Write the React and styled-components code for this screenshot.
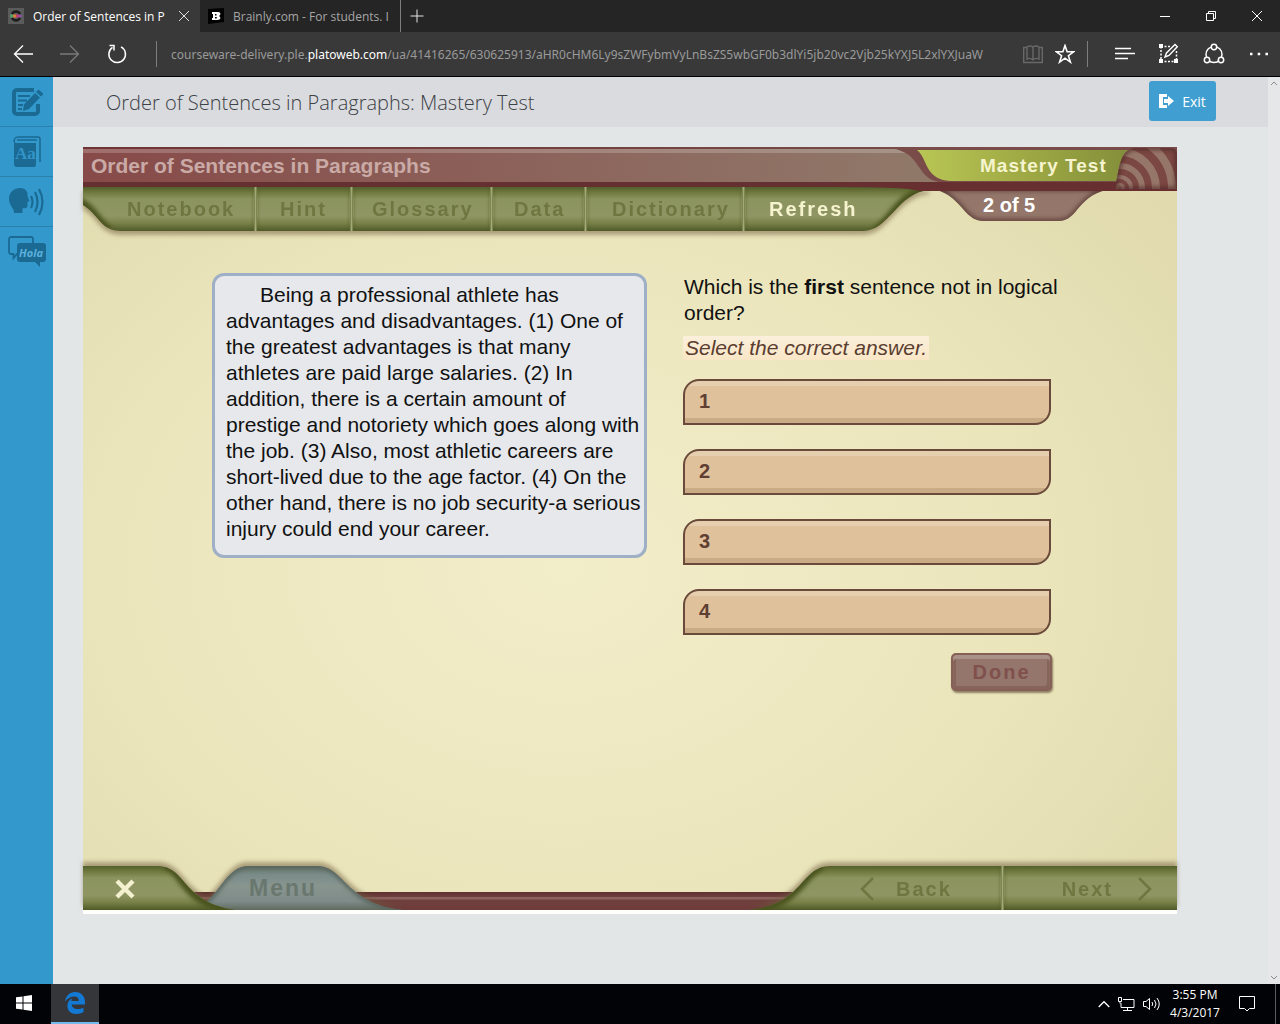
import React from "react";
import styled, { createGlobalStyle, css } from "styled-components";

const uiFont = `"Open Sans", "Noto Sans", sans-serif`;
const courseFont = `"Liberation Sans", Arial, sans-serif`;

const navItems = [
	{ label: "Notebook", width: 133, start: 6, disabled: true },
	{ label: "Hint", width: 93, start: 23, disabled: true },
	{ label: "Glossary", width: 137, start: 19, disabled: true },
	{ label: "Data", width: 91, start: 21, disabled: true },
	{ label: "Dictionary", width: 155, start: 25, disabled: true },
	{ label: "Refresh", width: 118, start: 24 }
];

const passage = [
	"Being a professional athlete has",
	"advantages and disadvantages. (1) One of",
	"the greatest advantages is that many",
	"athletes are paid large salaries. (2) In",
	"addition, there is a certain amount of",
	"prestige and notoriety which goes along with",
	"the job. (3) Also, most athletic careers are",
	"short-lived due to the age factor. (4) On the",
	"other hand, there is no job security-a serious",
	"injury could end your career."
];

const answers = ["1", "2", "3", "4"];

const OliveStops = () => (
	<>
		<stop offset="0" stopColor="#53602b" />
		<stop offset="0.12" stopColor="#6f783e" />
		<stop offset="0.27" stopColor="#8b935e" />
		<stop offset="0.66" stopColor="#8f9664" />
		<stop offset="0.82" stopColor="#7a8249" />
		<stop offset="1" stopColor="#4f5a28" />
	</>
);

const BrowserTabs = () => (
	<TabStrip>
		<Tab $active>
			<svg width="16" height="16" viewBox="0 0 16 16">
				<rect width="16" height="16" fill="#5b5b5b" />
				<path d="M4 6a4.5 4.5 0 0 1 8 0" fill="none" stroke="#1d1d1d" strokeWidth="2.4" />
				<path d="M4 10a4.5 4.5 0 0 0 8 0" fill="none" stroke="#1d1d1d" strokeWidth="2.4" />
				<path d="M2 8h3" stroke="#4fa06a" strokeWidth="3" />
				<path d="M5 8h3" stroke="#d9803a" strokeWidth="3" />
				<path d="M8 8h3" stroke="#c23a72" strokeWidth="3" />
				<path d="M11 8h3" stroke="#8a4fb0" strokeWidth="2" />
			</svg>
			<TabTitle>Order of Sentences in P</TabTitle>
			<ChromeButton aria-label="Close tab">
				<svg width="12" height="12" viewBox="0 0 12 12">
					<path d="M1 1l10 10M11 1L1 11" stroke="#e0e0e0" />
				</svg>
			</ChromeButton>
		</Tab>
		<Tab>
			<svg width="16" height="16" viewBox="0 0 16 16">
				<path d="M0 1l16-1v14L0 16z" fill="#000" />
				<path
					d="M4 4h6c3 0 3 3 1 4c2 1 2 4-1.500 4H4v-2h1V6H4zM7 6v1.500h1.500V6zM7 9v1.500h1.800V9z"
					fill="#fff"
					fillRule="evenodd"
				/>
			</svg>
			<TabTitle>Brainly.com - For students. I</TabTitle>
		</Tab>
		<NewTab aria-label="New tab">
			<svg width="14" height="14" viewBox="0 0 14 14">
				<path d="M7 .5v13M.5 7h13" stroke="#e6e6e6" />
			</svg>
		</NewTab>
		<WindowButtons>
			<WindowButton aria-label="Minimize">
				<svg width="12" height="12" viewBox="0 0 12 12">
					<path d="M1 6.500h10" stroke="#fff" />
				</svg>
			</WindowButton>
			<WindowButton aria-label="Restore">
				<svg width="12" height="12" viewBox="0 0 12 12">
					<path d="M1.500 3.500h7v7h-7zM3.500 3V1.500h7v7H9" fill="none" stroke="#fff" />
				</svg>
			</WindowButton>
			<WindowButton aria-label="Close">
				<svg width="12" height="12" viewBox="0 0 12 12">
					<path d="M1 1l10 10M11 1L1 11" stroke="#fff" />
				</svg>
			</WindowButton>
		</WindowButtons>
	</TabStrip>
);

const BrowserBar = () => (
	<Toolbar>
		<ToolGroup $width={46}>
			<ChromeButton aria-label="Back">
				<svg width="20" height="20" viewBox="0 0 20 20">
					<path d="M10 1.500L1.500 10l8.500 8.500M1.500 10H20" fill="none" stroke="#fff" strokeWidth="1.300" />
				</svg>
			</ChromeButton>
		</ToolGroup>
		<ToolGroup $width={48}>
			<ChromeButton aria-label="Forward" disabled>
				<svg width="20" height="20" viewBox="0 0 20 20">
					<path d="M10 1.500L18.500 10L10 18.500M18.500 10H0" fill="none" stroke="#7a7a7a" strokeWidth="1.300" />
				</svg>
			</ChromeButton>
		</ToolGroup>
		<ToolGroup $width={46}>
			<ChromeButton aria-label="Refresh">
				<svg width="20" height="20" viewBox="0 0 20 20">
					<path d="M5.500 3.400A8.300 8.300 0 1 0 14 2.900" fill="none" stroke="#fff" strokeWidth="1.500" />
					<path d="M2.500 1.500h4.500v5" fill="none" stroke="#fff" strokeWidth="1.500" />
				</svg>
			</ChromeButton>
		</ToolGroup>
		<Divider $left={16} />
		<Address role="textbox" aria-label="Address" tabIndex={0}>
			courseware-delivery.ple.<strong>platoweb.com</strong>
			/ua/41416265/630625913/aHR0cHM6Ly9sZWFybmVyLnBsZS5wbGF0b3dlYi5jb20vc2Vjb25kYXJ5L2xlYXJuaW
		</Address>
		<ToolGroup $width={32}>
			<ChromeButton aria-label="Reading view" disabled>
				<svg width="20" height="20" viewBox="0 0 20 20">
					<path
						d="M10 3v13.500M10 3c-2-1.300-4-1.300-6 0v12c2-1 4-1 6 1M10 3c2-1.300 4-1.300 6 0v12c-2-1-4-1-6 1M4 3.500H.7v15h18.600v-15H16"
						fill="none"
						stroke="#686868"
						strokeWidth="1.400"
					/>
				</svg>
			</ChromeButton>
		</ToolGroup>
		<ToolGroup $width={32}>
			<ChromeButton aria-label="Add to favorites">
				<svg width="20" height="20" viewBox="0 0 20 20">
					<path
						d="M10 1.500l2.100 6.300h6.500l-5.200 3.900 2 6.400L10 14.200l-5.400 3.900 2-6.400-5.200-3.900h6.500z"
						fill="none"
						stroke="#fff"
						strokeWidth="1.600"
					/>
				</svg>
			</ChromeButton>
		</ToolGroup>
		<Divider $left={6} />
		<ToolGroup $width={74}>
			<ChromeButton aria-label="Hub">
				<svg width="20" height="14" viewBox="0 0 20 14">
					<path d="M0 1.500h16M0 6.500h20M0 11.500h13" stroke="#fff" strokeWidth="1.400" />
				</svg>
			</ChromeButton>
		</ToolGroup>
		<ToolGroup $width={14}>
			<ChromeButton aria-label="Make a web note">
				<svg width="22" height="22" viewBox="0 0 22 22">
					<path d="M3 3.500h10M3 3.500v14M3 18.500h14M18.500 8v10" fill="none" stroke="#fff" strokeWidth="1.500" strokeDasharray="2 1.500" />
					<path d="M1 1h4v4H1zM1 16h4v4H1zM16 16h4v4h-4z" fill="#fff" />
					<path d="M7 14l1.500-4L17 1.500l2.300 2.300L11 12.500z" fill="#393939" stroke="#fff" strokeWidth="1.400" />
				</svg>
			</ChromeButton>
		</ToolGroup>
		<ToolGroup $width={76}>
			<ChromeButton aria-label="Share">
				<svg width="22" height="22" viewBox="0 0 22 22">
					<circle cx="11" cy="11.500" r="8" fill="none" stroke="#fff" strokeWidth="1.500" />
					<g fill="#393939" stroke="#fff" strokeWidth="1.500">
						<circle cx="11" cy="4" r="2.700" />
						<circle cx="4" cy="17" r="2.700" />
						<circle cx="18" cy="17" r="2.700" />
					</g>
				</svg>
			</ChromeButton>
		</ToolGroup>
		<ToolGroup $width={14}>
			<ChromeButton aria-label="More">
				<svg width="18" height="4" viewBox="0 0 18 4">
					<path d="M0 .7h2.500v2.500H0zM7.700.7h2.500v2.500H7.700zM15.400.7H18v2.500h-2.600z" fill="#fff" />
				</svg>
			</ChromeButton>
		</ToolGroup>
	</Toolbar>
);

const NotesIcon = () => (
	<svg width="32" height="30" viewBox="0 0 32 30">
		<path d="M23 3H6A3 3 0 0 0 3 6v18A3 3 0 0 0 6 27h18a3 3 0 0 0 3-3V17" fill="none" stroke="#1a6a94" strokeWidth="4" />
		<path d="M7 9h12M7 13.500h9M7 18h5M7 22h4" stroke="#1a6a94" strokeWidth="2" />
		<path d="M13 17.500L24 6l5 4.500L18 22l-6 2zM25 5l2.500-2.500 5 4.500L30 9.500z" fill="#1a6a94" />
	</svg>
);

const DictionaryIcon = () => (
	<svg width="28" height="32" viewBox="0 0 28 32">
		<path d="M1 6v22a3 3 0 0 0 3 3h17a2 2 0 0 0 2-2V7H3z" fill="#1a6a94" />
		<path d="M1 6c0-3 2-5 4-5h20a2 2 0 0 1 2 2v23M4 4h20" fill="none" stroke="#1a6a94" strokeWidth="1.600" />
		<text x="2" y="23" fontFamily="Liberation Serif, serif" fontWeight="bold" fontSize="17" fill="#3394c8">Aa</text>
	</svg>
);

const SpeakIcon = () => (
	<svg width="36" height="28" viewBox="0 0 36 28">
		<path d="M5 25c1-4-5-7-5-14C0 4 5 0 11 0c6 0 8 4 7.500 8l2 5-2 1v4c0 2-2 2.500-5 2.200V25z" fill="#1a6a94" />
		<path d="M22 8q3 6 0 12M26 4q5 10 0 20M30 1q7 13 0 26" fill="none" stroke="#1a6a94" strokeWidth="2.200" />
	</svg>
);

const TranslateIcon = () => (
	<svg width="38" height="32" viewBox="0 0 38 32">
		<path d="M10 18H9l-3.500 4v-4H3a2 2 0 0 1-2-2V3a2 2 0 0 1 2-2h20a2 2 0 0 1 2 2v4" fill="none" stroke="#1a6a94" strokeWidth="1.800" />
		<path d="M12 7h23a3 3 0 0 1 3 3v13a3 3 0 0 1-3 3h-3v5l-5-5H12a3 3 0 0 1-3-3V10a3 3 0 0 1 3-3z" fill="#1a6a94" />
		<text x="11" y="21" fontFamily="Open Sans, sans-serif" fontWeight="bold" fontStyle="italic" fontSize="11" fill="#5cb0dc">Hola</text>
	</svg>
);

const HeaderArt = () => (
	<ArtTopRight width="340" height="84" viewBox="754 0 340 84" aria-hidden="true">
		<defs>
			<linearGradient id="lime" x1="0" x2="1">
				<stop offset="0" stopColor="#b9c755" />
				<stop offset="0.45" stopColor="#a2ac46" />
				<stop offset="1" stopColor="#838f3a" />
			</linearGradient>
			<filter id="soft" x="-20%" y="-50%" width="140%" height="200%">
				<feGaussianBlur stdDeviation="2" />
			</filter>
			<clipPath id="rings">
				<path d="M1033 42V36C1037 18 1037 4 1051 1H1088q6 0 6 7V42z" />
			</clipPath>
			<clipPath id="count">
				<path d="M848 42C878 46 880 74 900 74H976C996 74 994 46 1030 42z" />
			</clipPath>
		</defs>
		<g clipPath="url(#count)">
			<path d="M848 42C878 46 880 74 900 74H976C996 74 994 46 1030 42z" fill="#94766a" />
			<path d="M848 42C878 46 880 74 900 74H976C996 74 994 46 1030 42z" fill="none" stroke="#5c3d38" strokeWidth="4" filter="url(#soft)" />
		</g>
		<path d="M790 0C824 0 829 10 836 20C843 31 850 36 866 36H1094V0z" fill="#7a4c49" />
		<path d="M834 3H1046C1038 8 1038 20 1034 34H868C850 33 846 24 841 13Q838 6 834 3z" fill="url(#lime)" />
		<path d="M754 35H1094V44H836Q825 40 754 40z" fill="#682f30" />
		<g clipPath="url(#rings)">
			<path d="M1030 0H1094V44H1030z" fill="#7a4743" />
			<g fill="none" stroke="#967669">
				<circle cx="1037" cy="41" r="3" strokeWidth="4" />
				<circle cx="1037" cy="41" r="11" strokeWidth="4" />
				<circle cx="1037" cy="41" r="22" strokeWidth="6" />
				<circle cx="1037" cy="41" r="36" strokeWidth="8" />
				<circle cx="1037" cy="41" r="52" strokeWidth="8" />
			</g>
			<path d="M1033 42V36C1037 18 1037 4 1051 1H1088q6 0 6 7V42z" fill="none" stroke="#4b2624" strokeWidth="3" filter="url(#soft)" />
		</g>
	</ArtTopRight>
);

const NavLeftCap = () => (
	<svg width="38" height="44" viewBox="0 0 38 44" aria-hidden="true">
		<defs>
			<linearGradient id="oliveFill" gradientUnits="userSpaceOnUse" x1="0" x2="0" y1="0" y2="44">
				<OliveStops />
			</linearGradient>
			<clipPath id="navL">
				<path d="M0 0H38V44C18 44 16 28 0 18z" />
			</clipPath>
		</defs>
		<g clipPath="url(#navL)">
			<path d="M0 0H38V44H0z" fill="url(#oliveFill)" />
			<path d="M26 44C16 38 12 26 0 18L-8 13" fill="none" stroke="#48521f" strokeWidth="10" filter="url(#soft)" />
		</g>
	</svg>
);

const NavRightCap = () => (
	<svg width="66" height="44" viewBox="0 0 66 44" aria-hidden="true">
		<defs>
			<clipPath id="navR">
				<path d="M0 0H66V3C34 6 26 44 0 44z" />
			</clipPath>
		</defs>
		<g clipPath="url(#navR)">
			<path d="M0 0H66V44H0z" fill="url(#oliveFill)" />
			<path d="M12 45C28 36 38 6 66 3" fill="none" stroke="#48521f" strokeWidth="10" filter="url(#soft)" />
		</g>
	</svg>
);

const FooterLeftArt = () => (
	<ArtBottomLeft width="320" height="44" viewBox="0 0 320 44" aria-hidden="true">
		<defs>
			<linearGradient id="slate" x1="0" x2="0" y1="0" y2="1">
				<stop offset="0" stopColor="#66756a" />
				<stop offset="0.2" stopColor="#7a8c89" />
				<stop offset="0.45" stopColor="#88958f" />
				<stop offset="0.8" stopColor="#7e8b88" />
				<stop offset="1" stopColor="#606a5e" />
			</linearGradient>
			<clipPath id="menuTab">
				<path d="M112 44C138 30 142 0 166 0H234C262 0 262 38 320 44z" />
			</clipPath>
			<clipPath id="closeTab">
				<path d="M0 0H74C104 0 98 36 152 44H0z" />
			</clipPath>
		</defs>
		<g clipPath="url(#menuTab)">
			<path d="M100 0H320V44H100z" fill="url(#slate)" />
			<path d="M112 44C138 30 142 0 166 0H234C262 0 262 38 320 44" fill="none" stroke="#56635c" strokeWidth="5" filter="url(#soft)" />
		</g>
		<g clipPath="url(#closeTab)">
			<path d="M0 0H160V44H0z" fill="url(#oliveFill)" />
			<path d="M82 -2C104 6 98 36 152 44" fill="none" stroke="#48521f" strokeWidth="10" filter="url(#soft)" />
		</g>
	</ArtBottomLeft>
);

const FooterRightCap = () => (
	<svg width="90" height="44" viewBox="0 0 90 44" aria-hidden="true">
		<defs>
			<clipPath id="footR">
				<path d="M0 44C54 38 50 1 80 0H90V44z" />
			</clipPath>
		</defs>
		<g clipPath="url(#footR)">
			<path d="M0 0H90V44H0z" fill="url(#oliveFill)" />
			<path d="M0 44C50 38 52 6 72 -1" fill="none" stroke="#48521f" strokeWidth="10" filter="url(#soft)" />
		</g>
	</svg>
);

const Course = () => (
	<CourseFrame>
		<CourseHeader>
			<CourseTitleBar>
				<CourseTitle>Order of Sentences in Paragraphs</CourseTitle>
			</CourseTitleBar>
			<CourseNav>
				<NavLeftCap />
				{navItems.map((item, i) => (
					<React.Fragment key={item.label}>
						{i > 0 && <Groove />}
						<NavButton $width={item.width} $start={item.start} disabled={item.disabled}>
							{item.label}
						</NavButton>
					</React.Fragment>
				))}
				<NavRightCap />
			</CourseNav>
			<HeaderArt />
			<SectionLabel>
				<SectionName>Mastery Test</SectionName>
				<Progress>2 of 5</Progress>
			</SectionLabel>
		</CourseHeader>

		<Question>
			<Passage>
				{passage.map(line => (
					<PassageLine key={line}>{line} </PassageLine>
				))}
			</Passage>
			<AnswerPanel>
				<Prompt>
					Which is the <b>first</b> sentence not in logical
					<br />
					order?
				</Prompt>
				<Instruction>Select the correct answer.</Instruction>
				<AnswerList>
					{answers.map(answer => (
						<Answer key={answer}>{answer}</Answer>
					))}
				</AnswerList>
				<DoneButton disabled>Done</DoneButton>
			</AnswerPanel>
		</Question>

		<CourseFooter>
			<FooterLeftArt />
			<FooterLeft>
				<CloseButton aria-label="Close">
					<svg width="20" height="20" viewBox="0 0 20 20">
						<path d="M2 2l16 16M18 2L2 18" stroke="#f3f1cf" strokeWidth="4.400" />
					</svg>
				</CloseButton>
				<MenuButton disabled>Menu</MenuButton>
			</FooterLeft>
			<FooterRight>
				<FooterRightCap />
				<PagerButton $width={161} disabled>
					<svg width="14" height="24" viewBox="0 0 14 24">
						<path d="M13 1L2 12l11 11" fill="none" stroke="#6f7640" strokeWidth="2.600" />
					</svg>
					Back
				</PagerButton>
				<Groove />
				<PagerButton $width={173} $end disabled>
					Next
					<svg width="14" height="24" viewBox="0 0 14 24">
						<path d="M1 1l11 11L1 23" fill="none" stroke="#6f7640" strokeWidth="2.600" />
					</svg>
				</PagerButton>
			</FooterRight>
		</CourseFooter>
	</CourseFrame>
);

const TaskbarRow = () => (
	<Taskbar>
		<TaskButton aria-label="Start">
			<svg width="16" height="16" viewBox="0 0 16 16">
				<path d="M0 2.300L6.500 1.400V7.500H0zM7.500 1.200L16 0v7.500H7.500zM0 8.500h6.500v6.100L0 13.700zM7.500 8.500H16V16l-8.500-1.200z" fill="#fff" />
			</svg>
		</TaskButton>
		<TaskButton $active aria-label="Microsoft Edge">
			<svg width="20" height="22" viewBox="0 0 20 22">
				<path
					d="M0 9.600C.8 4 4.500 0 10.300 0C16.500 0 20 4.500 20 10v2.500H6.700c.3 3 2.800 4.500 5.800 4.500 2.200 0 4.300-.6 6-1.600v4.700C16.600 21.300 14 22 11.200 22 6 22 2.400 18.800 2.400 14c0-3.500 1.800-6.300 5-7.900C6.700 7 6.400 8 6.300 9h7.500c0-2.600-1.300-4.400-4.300-4.400C5.500 4.600 2.200 6.600 0 9.600z"
					fill="#1379d3"
				/>
			</svg>
		</TaskButton>
		<Tray>
			<svg width="12" height="8" viewBox="0 0 12 8">
				<path d="M.7 7L6 1.700 11.300 7" fill="none" stroke="#fff" strokeWidth="1.300" />
			</svg>
			<svg width="17" height="15" viewBox="0 0 17 15">
				<path d="M5 2.500h11v8H3V6M9.500 10.500v3M5 13.500h9M.5.5h3v4h-3zM2 4.500v2" fill="none" stroke="#fff" />
			</svg>
			<svg width="17" height="14" viewBox="0 0 17 14">
				<path d="M.5 4.500H3L6.500 1.500v11L3 9.500H.5zM9 5q1.500 2 0 4M11.500 3q3 4 0 8M14 1q4.500 6 0 12" fill="none" stroke="#fff" />
			</svg>
			<Clock>
				<span>3:55 PM</span>
				<span>4/3/2017</span>
			</Clock>
			<svg width="16" height="16" viewBox="0 0 16 16">
				<path d="M.5.500h15v12h-5L8 15l-2.500-2.500h-5z" fill="none" stroke="#fff" />
			</svg>
		</Tray>
		<ShowDesktop aria-label="Show desktop" />
	</Taskbar>
);

const App = () => (
	<Shell>
		<GlobalStyle />
		<BrowserTabs />
		<BrowserBar />
		<Viewport>
			<SideBar>
				<SideButton aria-label="Notes"><NotesIcon /></SideButton>
				<SideButton aria-label="Dictionary"><DictionaryIcon /></SideButton>
				<SideButton aria-label="Read aloud"><SpeakIcon /></SideButton>
				<SideButton aria-label="Translate"><TranslateIcon /></SideButton>
			</SideBar>
			<Main>
				<PageHeader>
					<PageTitle>Order of Sentences in Paragraphs: Mastery Test</PageTitle>
					<ExitButton>
						<svg width="15" height="14" viewBox="0 0 15 14">
							<path d="M0 0h8v3H4v8h4v3H0z" fill="#fff" />
							<path d="M5 5h4V2l6 5-6 5V9H5z" fill="#fff" />
						</svg>
						Exit
					</ExitButton>
				</PageHeader>
				<Course />
			</Main>
			<ScrollBar aria-hidden="true">
				<svg width="8" height="5" viewBox="0 0 8 5">
					<path d="M1 4l3-3 3 3" fill="none" stroke="#8c8c8c" />
				</svg>
				<svg width="8" height="5" viewBox="0 0 8 5">
					<path d="M1 1l3 3 3-3" fill="none" stroke="#8c8c8c" />
				</svg>
			</ScrollBar>
		</Viewport>
		<TaskbarRow />
	</Shell>
);

const GlobalStyle = createGlobalStyle`
	* {
		box-sizing: border-box;
	}
	body {
		margin: 0;
		font-family: ${uiFont};
	}
	button {
		margin: 0;
		padding: 0;
		border: 0;
		background: none;
		font: inherit;
		color: inherit;
	}
	svg {
		display: block;
		flex: none;
	}
`;

const Shell = styled.div`
	display: flex;
	flex-direction: column;
	min-height: 100vh;
	background: #e3e6e7;
`;

const TabStrip = styled.div`
	display: flex;
	height: 32px;
	background: #252525;
`;

const Tab = styled.div`
	display: flex;
	align-items: center;
	gap: 9px;
	width: 200px;
	padding: 0 10px 0 8px;
	background: ${p => (p.$active ? "#393939" : "#252525")};
	color: ${p => (p.$active ? "#ffffff" : "#a6a6a6")};
`;

const TabTitle = styled.span`
	flex: 1;
	white-space: nowrap;
	font-size: 12px;
`;

const ChromeButton = styled.button`
	display: flex;
`;

const NewTab = styled.button`
	display: flex;
	align-items: center;
	padding-left: 9px;
	border-left: 1px solid #7d7d7d;
`;

const WindowButtons = styled.div`
	display: flex;
	margin-left: auto;
`;

const WindowButton = styled.button`
	display: flex;
	align-items: center;
	justify-content: center;
	width: 46px;
`;

const Toolbar = styled.div`
	display: flex;
	align-items: center;
	height: 45px;
	padding: 0 14px 0 0;
	border-bottom: 1px solid #000000;
	background: #393939;
`;

const ToolGroup = styled.div`
	display: flex;
	align-items: center;
	justify-content: center;
	width: ${p => p.$width}px;
`;

const Divider = styled.div`
	width: 1px;
	height: 26px;
	margin-left: ${p => p.$left}px;
	background: #7d7d7d;
`;

const Address = styled.div`
	flex: 1;
	min-width: 0;
	margin: 0 12px 0 14px;
	overflow: hidden;
	white-space: nowrap;
	font-family: "Noto Sans", sans-serif;
	font-size: 12px;
	color: #9a9a9a;

	strong {
		font-weight: normal;
		color: #ffffff;
	}
`;

const Viewport = styled.div`
	display: flex;
	flex: 1;
`;

const SideBar = styled.nav`
	width: 53px;
	background: #3399cc;
`;

const SideButton = styled.button`
	display: flex;
	align-items: center;
	justify-content: center;
	width: 100%;
	height: 50px;
	border-bottom: 1px solid #2b80ac;

	&:last-child {
		border-bottom: 0;
	}
`;

const Main = styled.main`
	display: flex;
	flex: 1;
	flex-direction: column;
	min-width: 0;
`;

const PageHeader = styled.header`
	display: flex;
	align-items: center;
	justify-content: space-between;
	height: 50px;
	padding: 0 52px 2px 53px;
	background: #dadbde;
`;

const PageTitle = styled.h1`
	margin: 0;
	padding-top: 2px;
	font-size: 20px;
	font-weight: 300;
	color: #3c4146;
`;

const ExitButton = styled.button`
	display: flex;
	align-items: center;
	justify-content: center;
	gap: 8px;
	width: 67px;
	height: 40px;
	border-radius: 3px;
	background: #409fd0;
	font-size: 14px;
	color: #ffffff;
`;

const ScrollBar = styled.div`
	display: flex;
	flex-direction: column;
	align-items: center;
	justify-content: space-between;
	width: 12px;
	padding: 4px 0;
	background: #e6e7e8;
`;

const CourseFrame = styled.section`
	position: relative;
	display: flex;
	flex: 1;
	flex-direction: column;
	margin: 20px 91px 70px 30px;
	border-bottom: 4px solid #fffffb;
	background: radial-gradient(ellipse 70% 75% at 44% 55%, #f3eeca, #eae5bb 60%, #e0daae);
	font-family: ${courseFont};
`;

const CourseHeader = styled.header`
	position: relative;
`;

const CourseTitleBar = styled.div`
	display: flex;
	align-items: center;
	height: 40px;
	padding: 0 8px 3px;
	background:
		linear-gradient(
			rgba(90, 30, 35, 0.5) 2px,
			rgba(255, 255, 255, 0.2) 2px,
			rgba(255, 255, 255, 0.2) 6px,
			transparent 6px,
			transparent 35px,
			#653031 35px
		),
		linear-gradient(90deg, #874a49, #907869 75%);
`;

const CourseTitle = styled.h2`
	margin: 0;
	font-size: 21px;
	line-height: 24px;
	color: #c9aaa6;
`;

const olive = css`
	background: linear-gradient(#53602b, #6f783e 12%, #8b935e 27%, #8f9664 66%, #7a8249 82%, #4f5a28);
`;

const CourseNav = styled.nav`
	display: flex;
	width: fit-content;
	height: 44px;
	filter: drop-shadow(0 4px 2px rgba(110, 90, 60, 0.5));
`;

const courseButtonText = css`
	font-size: 20px;
	font-weight: bold;
	letter-spacing: 2px;
`;

const NavButton = styled.button`
	${olive}
	${courseButtonText}
	width: ${p => p.$width}px;
	padding-left: ${p => p.$start}px;
	text-align: left;
	color: ${p => (p.disabled ? "#6f7640" : "#f6f4cf")};
`;

const Groove = styled.div`
	position: relative;
	z-index: 1;
	width: 3px;
	background: linear-gradient(90deg, #6c753d, #a3a878, #6c753d);
	box-shadow:
		-3px 0 2px -1px rgba(84, 94, 42, 0.5),
		3px 0 2px -1px rgba(84, 94, 42, 0.5);
`;

const ArtTopRight = styled.svg`
	position: absolute;
	top: 0;
	right: 0;
`;

const SectionLabel = styled.div`
	position: absolute;
	top: 0;
	right: 0;
	width: 197px;
	color: #ffffff;
	font-weight: bold;
`;

const SectionName = styled.div`
	padding-top: 7px;
	font-size: 19px;
	line-height: 24px;
	letter-spacing: 1px;
	color: #f6f4cf;
`;

const Progress = styled.div`
	padding: 15px 0 0 3px;
	font-size: 20px;
	line-height: 24px;
`;

const Question = styled.div`
	display: flex;
	flex: 1;
	align-items: flex-start;
	gap: 36px;
	padding: 42px 40px 40px 129px;
`;

const Passage = styled.p`
	width: 435px;
	margin: 0;
	padding: 6px 0 13px 11px;
	border: 3px solid #9fafc6;
	border-radius: 12px;
	background: #e6e8ec;
	font-size: 21px;
	line-height: 26px;
	text-indent: 34px;
	color: #111111;
`;

const PassageLine = styled.span`
	display: block;
	white-space: nowrap;

	& + & {
		text-indent: 0;
	}
`;

const AnswerPanel = styled.div`
	display: flex;
	flex-direction: column;
	align-items: flex-start;
	width: 376px;
`;

const Prompt = styled.p`
	margin: 0;
	padding: 1px 0 10px 1px;
	font-size: 21px;
	line-height: 26px;
	white-space: nowrap;
	color: #111111;
`;

const Instruction = styled.p`
	margin: 0;
	padding: 0 2px;
	background: linear-gradient(#fbf0dc, #f9e6c6);
	font-size: 21px;
	font-style: italic;
	line-height: 24px;
	color: #5a3d30;
`;

const AnswerList = styled.div`
	display: flex;
	flex-direction: column;
	gap: 24px;
	width: 368px;
	padding: 19px 0 18px;
`;

const Answer = styled.button`
	height: 46px;
	padding: 0 14px 2px;
	border: 2px solid #6a4a3b;
	border-radius: 16px 0 16px 0;
	background: linear-gradient(#e6cfaf 5px, #dfc29b 5px, #dfc29b 37px, #c9ab86 37px);
	font-size: 20px;
	font-weight: bold;
	text-align: left;
	color: #5f3f33;
`;

const DoneButton = styled.button`
	${courseButtonText}
	align-self: flex-end;
	width: 101px;
	height: 38px;
	margin-right: 7px;
	border: 2px solid #865f57;
	border-radius: 5px;
	background: #94766c;
	box-shadow:
		inset 0 4px 1px #ab9289,
		inset 3px 0 0 #876459,
		inset -3px -3px 0 #876459,
		1px 2px 2px rgba(80, 60, 40, 0.6);
	color: #80504c;
`;

const CourseFooter = styled.footer`
	position: relative;
	display: flex;
	justify-content: space-between;
	height: 44px;
	background: linear-gradient(
		transparent 26px,
		#5e3030 26px,
		#6f403d 31px,
		#8c6260 31px,
		#8c6260 33px,
		#70403e 34px,
		#6e3c3a 44px
	);
`;

const ArtBottomLeft = styled.svg`
	position: absolute;
	left: 0;
	bottom: 0;
	filter: drop-shadow(0 -4px 2px rgba(110, 90, 60, 0.5));
`;

const FooterLeft = styled.div`
	position: relative;
	display: flex;
	align-items: center;
`;

const CloseButton = styled.button`
	display: flex;
	align-items: center;
	justify-content: center;
	width: 84px;
	height: 44px;
	padding-top: 2px;
`;

const MenuButton = styled.button`
	${courseButtonText}
	width: 232px;
	height: 44px;
	font-size: 23px;
	color: #69776f;
`;

const FooterRight = styled.div`
	display: flex;
	filter: drop-shadow(0 -4px 2px rgba(110, 90, 60, 0.5));
`;

const PagerButton = styled.button`
	${olive}
	${courseButtonText}
	display: flex;
	align-items: center;
	justify-content: ${p => (p.$end ? "flex-end" : "flex-start")};
	gap: ${p => (p.$end ? 25 : 22)}px;
	width: ${p => p.$width}px;
	padding: ${p => (p.$end ? "2px 25px 0 0" : "2px 0 0 20px")};
	color: #6f7640;
`;

const Taskbar = styled.footer`
	display: flex;
	height: 40px;
	background: #020306;
	color: #ffffff;
`;

const TaskButton = styled.button`
	display: flex;
	align-items: center;
	justify-content: center;
	width: ${p => (p.$active ? 48 : 51)}px;
	padding-right: ${p => (p.$active ? 0 : 3)}px;
	border-bottom: 2px solid ${p => (p.$active ? "#76b9ed" : "transparent")};
	background: ${p => (p.$active ? "#34363a" : "transparent")};
`;

const Tray = styled.div`
	display: flex;
	align-items: center;
	gap: 8px;
	margin-left: auto;
	padding-right: 20px;
`;

const Clock = styled.time`
	display: flex;
	flex-direction: column;
	align-items: center;
	width: 54px;
	margin-right: 9px;
	font-size: 12px;
	line-height: 18px;
`;

const ShowDesktop = styled.button`
	width: 5px;
	border-left: 1px solid #5c5c5c;
`;

export default App;
